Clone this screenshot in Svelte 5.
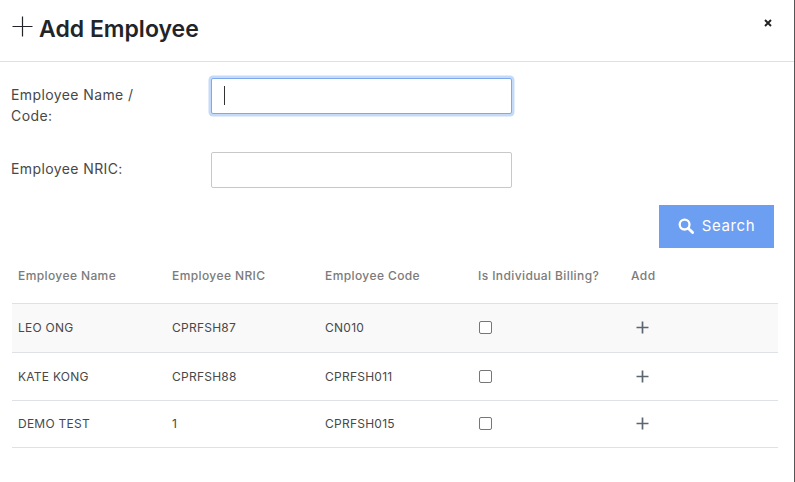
<script>
  let employees = [
    { name: 'LEO ONG', nric: 'CPRFSH87', code: 'CN010' },
    { name: 'KATE KONG', nric: 'CPRFSH88', code: 'CPRFSH011' },
    { name: 'DEMO TEST', nric: '1', code: 'CPRFSH015' }
  ];
</script>

<div class="modal">
  <header class="modal-header">
    <h1>
      <svg class="title-plus" width="21" height="21" viewBox="0 0 21 21"><path d="M10.5 0.5v20M0.5 10.5h20" stroke="#212529" stroke-width="1.2" fill="none" /></svg>
      Add Employee
    </h1>
    <svg class="close" width="8" height="8" viewBox="0 0 8 8"><path d="M1 1l6 6M7 1l-6 6" stroke="#222" stroke-width="1.9" fill="none" /></svg>
  </header>

  <div class="form">
    <div class="form-row">
      <label for="emp-name">Employee Name / Code:</label>
      <div class="input-wrap">
        <input id="emp-name" class="focused" type="text" />
        <span class="caret"></span>
      </div>
    </div>
    <div class="form-row">
      <label for="emp-nric">Employee NRIC:</label>
      <div class="input-wrap">
        <input id="emp-nric" type="text" />
      </div>
    </div>
  </div>

  <div class="actions">
    <button class="search-btn">
      <svg width="16" height="16" viewBox="0 0 16 16"><circle cx="6.6" cy="6.6" r="4.9" stroke="#fff" stroke-width="2.3" fill="none" /><path d="M10.2 10.2l4.4 4.4" stroke="#fff" stroke-width="2.8" stroke-linecap="round" /></svg>
      <span>Search</span>
    </button>
  </div>

  <table>
    <thead>
      <tr>
        <th class="col-name">Employee Name</th>
        <th class="col-mid">Employee NRIC</th>
        <th class="col-mid">Employee Code</th>
        <th class="col-mid">Is Individual Billing?</th>
        <th>Add</th>
      </tr>
    </thead>
    <tbody>
      {#each employees as emp, i}
        <tr class:striped={i === 0}>
          <td>{emp.name}</td>
          <td>{emp.nric}</td>
          <td>{emp.code}</td>
          <td><span class="check"></span></td>
          <td>
            <svg class="add" width="13" height="13" viewBox="0 0 13 13"><path d="M6.5 0.5v12M0.5 6.5h12" stroke="#5c6670" stroke-width="1.7" fill="none" /></svg>
          </td>
        </tr>
      {/each}
    </tbody>
  </table>
</div>

<style>
  :global(body) {
    margin: 0;
    background: #fff;
  }
  .modal {
    width: 795px;
    height: 482px;
    box-sizing: border-box;
    border-right: 1px solid #555;
    background: #fff;
    font-family: "Inter", "Liberation Sans", sans-serif;
    color: #444;
    overflow: hidden;
  }
  .modal-header {
    height: 62px;
    box-sizing: border-box;
    border-bottom: 1px solid #dee2e6;
    padding: 0 22px 0 12px;
    display: flex;
    align-items: center;
    justify-content: space-between;
  }
  h1 {
    margin: 0 0 4px;
    display: flex;
    align-items: center;
    gap: 6px;
    font-size: 23px;
    font-weight: 600;
    color: #212529;
  }
  .title-plus {
    margin-bottom: 4px;
  }
  .close {
    margin-bottom: 16px;
  }
  .form {
    padding: 16px 11px 0 11px;
    display: flex;
    flex-direction: column;
    gap: 25px;
  }
  .form-row {
    display: flex;
    align-items: flex-start;
    min-height: 36px;
  }
  .form-row:first-child {
    min-height: 49px;
  }
  label {
    width: 200px;
    flex-shrink: 0;
    box-sizing: border-box;
    padding: 6px 50px 0 0;
    font-size: 14px;
    line-height: 21px;
    letter-spacing: 0.4px;
    color: #484848;
  }
  .input-wrap {
    position: relative;
    width: 301px;
    height: 36px;
  }
  input {
    display: block;
    width: 100%;
    height: 100%;
    box-sizing: border-box;
    border: 1px solid #c8c8c8;
    border-radius: 2px;
    background: #fff;
    outline: none;
    padding: 0 12px;
  }
  input.focused {
    border-color: #7eaaec;
    box-shadow: 0 0 0 2.5px #c5daf9;
  }
  .caret {
    position: absolute;
    left: 13px;
    top: 8px;
    width: 1px;
    height: 19px;
    background: #333;
  }
  .actions {
    display: flex;
    justify-content: flex-end;
    padding: 17px 20px 0 0;
  }
  .search-btn {
    width: 115px;
    height: 43px;
    border: none;
    border-radius: 0;
    background: #6c9ef2;
    color: #fff;
    font-family: inherit;
    font-size: 15px;
    letter-spacing: 0.6px;
    display: flex;
    align-items: center;
    justify-content: center;
    gap: 8px;
    padding: 0 0 2px;
  }
  table {
    width: 766px;
    margin: 0 0 0 12px;
    border-collapse: collapse;
    table-layout: fixed;
  }
  th {
    box-sizing: border-box;
    height: 55px;
    padding: 0 0 0 6px;
    text-align: left;
    font-size: 12px;
    letter-spacing: 0.4px;
    font-weight: 500;
    color: #7b7b7b;
    border-bottom: 1px solid #dee2e6;
  }
  .col-name {
    width: 154px;
  }
  .col-mid {
    width: 153px;
  }
  td {
    box-sizing: border-box;
    height: 48px;
    padding: 0 0 0 6px;
    font-size: 12px;
    letter-spacing: 0.25px;
    color: #484848;
    border-bottom: 1px solid #dee2e6;
  }
  tbody tr:first-child td {
    height: 49px;
  }
  tbody tr:last-child td {
    height: 47px;
  }
  tr.striped td {
    background: #f9f9f9;
  }
  .check {
    display: block;
    width: 11px;
    height: 11px;
    margin-left: 1px;
    border: 1px solid #767676;
    border-radius: 2px;
    background: #fff;
  }
  .add {
    display: block;
    margin-left: 5px;
  }
</style>
